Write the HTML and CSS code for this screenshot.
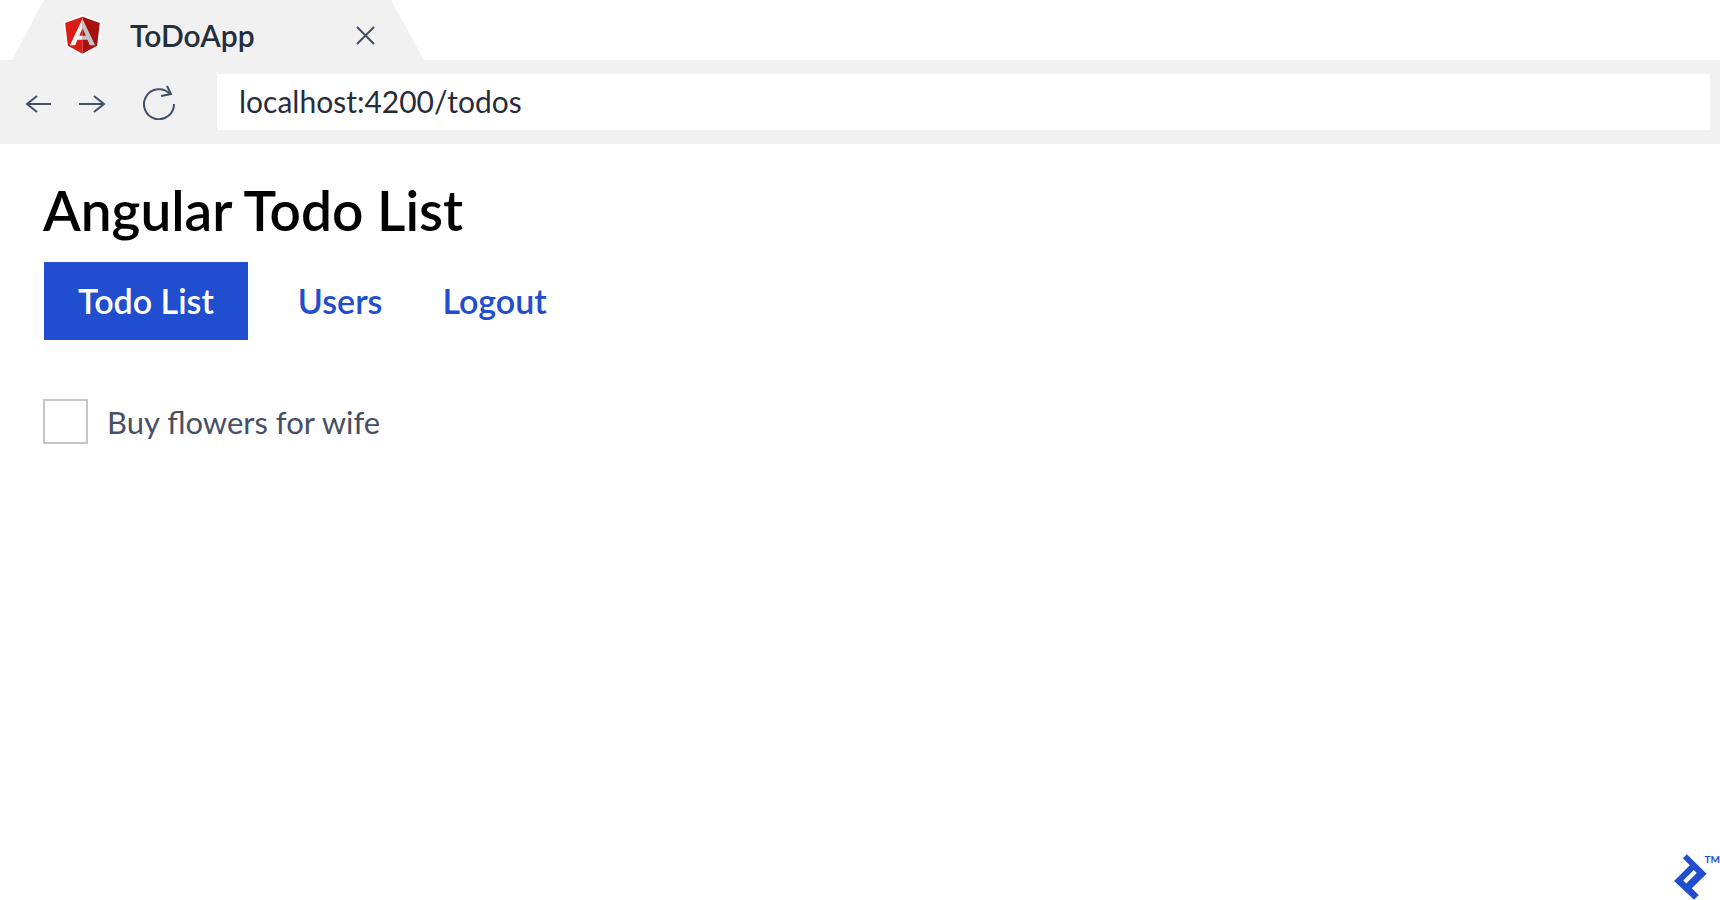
FILE: index.html
```html
<!DOCTYPE html>
<html lang="en">

<head>
    <meta charset="utf-8" />
    <meta name="viewport" content="width=device-width, initial-scale=1.0" />
    <title>ToDoApp</title>
    <link rel="stylesheet" href="styles.css">
</head>

<body>
    <header class="browser">
        <div class="tab-strip">
            <div class="tab">
                <svg class="tab-logo" viewBox="0 0 250 250" aria-hidden="true">
                    <path fill="#fff" stroke="#fff" stroke-width="24" stroke-linejoin="round" d="M125 5 8 47l18 154 99 54 99-54 18-154z" />
                    <path fill="#dd1b16" d="M125 5 8 47l18 154 99 54z" />
                    <path fill="#a6120d" d="M125 5v250l99-54 18-154z" />
                    <path fill="#f2f2f2" d="M125 18 40 198h36l15-38h34v-26h-22l22-53z" />
                    <path fill="#c4c4c4" d="M125 18v63l22 53h-22v26h34l15 38h36z" />
                </svg>
                <span class="tab-title">ToDoApp</span>
                <button class="icon-button tab-close" type="button" aria-label="Close tab">
                    <svg class="icon-close" viewBox="0 0 20 20">
                        <path d="M1 2l17 17M18 2 1 19" />
                    </svg>
                </button>
            </div>
        </div>
        <div class="toolbar">
            <div class="toolbar-buttons">
                <button class="icon-button" type="button" aria-label="Back">
                    <svg class="icon-arrow" viewBox="0 0 28 24">
                        <path d="M26 14H2M12 6 2 14l10 8" />
                    </svg>
                </button>
                <button class="icon-button" type="button" aria-label="Forward">
                    <svg class="icon-arrow" viewBox="0 0 28 24">
                        <path d="M0 14h25M15 6l10 8-10 8" />
                    </svg>
                </button>
                <button class="icon-button reload" type="button" aria-label="Reload">
                    <svg class="icon-reload" viewBox="0 0 34 36">
                        <path d="M31 20a15 15 0 1 1-4-10M24 2l4 8-10 2" />
                    </svg>
                </button>
            </div>
            <input class="address" type="text" aria-label="Address" value="localhost:4200/todos">
        </div>
    </header>

    <main class="page">
        <h1 class="page-title">Angular Todo List</h1>
        <nav class="nav">
            <a class="nav-link active" href="#todos">Todo List</a>
            <a class="nav-link" href="#users">Users</a>
            <a class="nav-link" href="#logout">Logout</a>
        </nav>
        <div class="todo">
            <input class="todo-check" type="checkbox" id="todo-1">
            <label class="todo-label" for="todo-1">Buy flowers for wife</label>
        </div>
    </main>

    <footer class="brand">
        <svg class="brand-logo" viewBox="0 0 100 140" aria-hidden="true">
            <path fill="#204ecf" fill-rule="evenodd" d="M39 1 99 60 54 104l21 21-14 14L0 82l48-48-21-21zM60 49 28 81l9 9 32-32z" />
        </svg>
        <span class="brand-mark">TM</span>
    </footer>
</body>

</html>
```

FILE: styles.css
```css
* {
    box-sizing: border-box;
}

body {
    display: flex;
    flex-direction: column;
    min-height: 100vh;
    margin: 0;
    font-family: "Lato", "Liberation Sans", sans-serif;
    background-color: #ffffff;
    color: #262d3d;
}

/* Browser window */
.tab-strip {
    display: flex;
    padding-left: 12px;
}

.tab {
    display: flex;
    align-items: center;
    width: 412px;
    height: 60px;
    padding: 9px 48px 0 52px;
    background-color: #f1f1f1;
    clip-path: polygon(32px 0, 379px 0, 100% 100%, 0 100%);
}

.tab-logo {
    width: 37px;
    height: 37px;
    overflow: visible;
}

.tab-title {
    margin-left: 29px;
    font-size: 30px;
    font-weight: 600;
    line-height: 34px;
}

.icon-button {
    display: flex;
    padding: 0;
    border: none;
    background: none;
    cursor: pointer;
}

.icon-button svg {
    fill: none;
    stroke: #434f66;
    stroke-width: 2;
}

.tab-close {
    margin-left: auto;
}

.icon-close {
    width: 20px;
    height: 20px;
}

.toolbar {
    display: flex;
    align-items: center;
    padding: 14px 10px 14px 25px;
    background-color: #f1f1f1;
}

.toolbar-buttons {
    display: flex;
    align-items: center;
    gap: 26px;
    width: 192px;
}

.icon-arrow {
    width: 28px;
    height: 24px;
}

.reload {
    margin-left: 10px;
}

.icon-reload {
    width: 34px;
    height: 36px;
}

.address {
    flex: 1;
    min-width: 0;
    height: 56px;
    padding: 0 22px 2px;
    border: none;
    background-color: #ffffff;
    color: #262d3d;
    font-family: inherit;
    font-size: 30px;
}

/* Page content */
.page {
    flex: 1;
    padding: 34px 43px;
}

.page-title {
    margin: 0 0 20px;
    color: #000000;
    font-size: 55px;
    font-weight: 600;
    line-height: 64px;
}

.nav {
    display: flex;
    margin-left: 1px;
}

.nav-link {
    padding: 0 30px;
    color: #204ecf;
    font-size: 34px;
    font-weight: 600;
    line-height: 78px;
    text-decoration: none;
}

.nav-link.active {
    margin-right: 20px;
    padding: 0 34px;
    background-color: #204ecf;
    color: #ffffff;
}

.todo {
    display: flex;
    align-items: center;
    gap: 19px;
    margin-top: 59px;
}

.todo-check {
    width: 45px;
    height: 45px;
    margin: 0;
    border: 2px solid #c4c6cc;
    background-color: #ffffff;
    appearance: none;
}

.todo-check:checked {
    background-color: #204ecf;
}

.todo-label {
    color: #455065;
    font-size: 31px;
}

/* Logo in the corner */
.brand {
    display: flex;
    justify-content: flex-end;
}

.brand-logo {
    width: 33px;
    height: 46px;
}

.brand-mark {
    margin-left: -2px;
    color: #204ecf;
    font-size: 10px;
    font-weight: 700;
    line-height: 11px;
}
```
